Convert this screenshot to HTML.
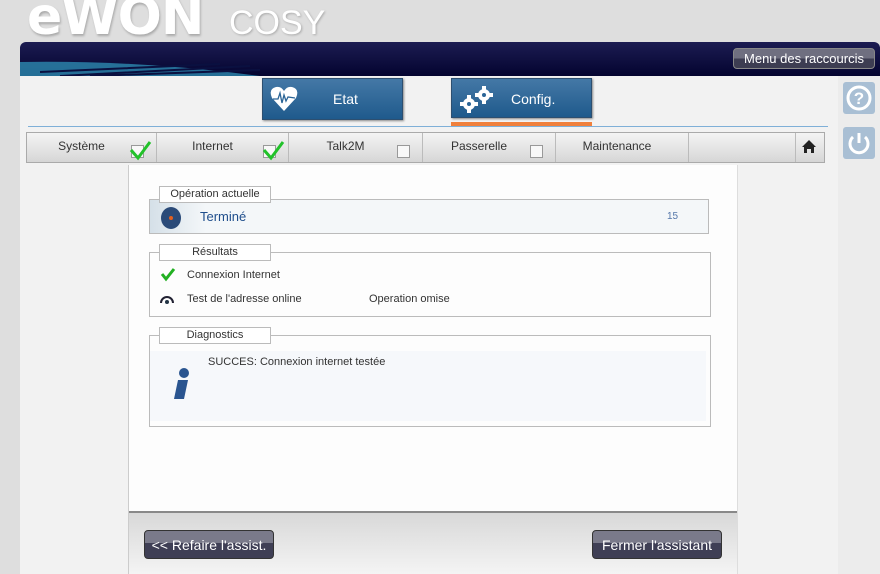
<!DOCTYPE html>
<html><head><meta charset="utf-8"><style>
*{margin:0;padding:0;box-sizing:border-box}
body{width:880px;height:574px;overflow:hidden;background:#dedede;font-family:"Liberation Sans",sans-serif;position:relative}
.abs{position:absolute}
.logo{left:27px;top:-13px;font:bold 52px "DejaVu Sans",sans-serif;color:#fff;text-shadow:1px 2px 2px #aaa;letter-spacing:-1px}
.cosy{left:229px;top:4px;font-size:34px;color:#fff;text-shadow:1px 1px 2px #aaa}
.hdr{left:20px;top:42px;width:860px;height:34px;background:linear-gradient(#1c1c52,#040430);border-radius:6px 6px 0 0;overflow:hidden}
.menu{left:733px;top:48px;width:142px;height:21px;border-radius:4px;background:linear-gradient(#6f6f80 50%,#3d3d52 50%);border:1px solid #888;color:#fff;font-size:13px;text-align:center;line-height:19px}
.content{left:20px;top:76px;width:818px;height:498px;background:#f2f2f2}
.side{left:838px;top:76px;width:42px;height:498px;background:#ececec}
.sbtn{left:843px;width:32px;height:32px;background:#a9bfd4;border-radius:3px}
.tab{top:78px;height:42px;width:141px;background:linear-gradient(#4478a6,#1f5a8c);color:#fff;font-size:14px;line-height:40px;border:1px solid #2d4f70;box-shadow:1px 1px 2px #888}
.bar{left:26px;top:132px;width:799px;height:31px;background:linear-gradient(#f4f4f4,#d6d6d6);border:1px solid #aaa}
.bar div{position:absolute;top:0;height:29px;border-right:1px solid #bbb;font-size:12px;color:#333;line-height:26px;text-align:center}
.cb{position:absolute;width:13px;height:13px;border:1px solid #999;background:#f8f8f8;top:12px}
.main{left:128px;top:165px;width:610px;height:409px;background:#fdfdfd;border-left:1px solid #ccc;border-right:1px solid #ddd}
.box{border:1px solid #bbb}
.leg{left:159px;width:112px;height:17px;background:#fff;border:1px solid #bbb;font-size:11px;color:#333;text-align:center;line-height:14px}
.t{font-size:11px;color:#333}
.foot{left:129px;top:511px;width:608px;height:63px;background:linear-gradient(#d8d8d8,#f4f4f4);border-top:2px solid #888}
.btn{top:530px;width:130px;height:29px;border-radius:4px;background:linear-gradient(#7a7a8a 45%,#3f3f55 45%);color:#fff;font-size:14px;text-align:center;line-height:29px;border:1px solid #333}
</style></head><body>
<div class="abs logo">eWON</div>
<div class="abs cosy">COSY</div>
<div class="abs hdr"><svg width="260" height="34" class="abs" style="left:0;top:0"><path d="M0 20 Q120 18 240 34 L0 34Z" fill="#2d8ab0" opacity=".8"/><path d="M40 34 L230 24 M70 34 L240 28 M20 30 L200 22" stroke="#0a1040" stroke-width="2"/></svg></div>
<div class="abs menu">Menu des raccourcis</div>
<div class="abs content"></div>
<div class="abs side"></div>
<div class="abs sbtn" style="top:82px"><svg width="32" height="32"><circle cx="16" cy="16" r="11" fill="none" stroke="#fff" stroke-width="3"/><text x="16" y="22" font-size="17" font-weight="bold" fill="#fff" text-anchor="middle" font-family="Liberation Sans">?</text></svg></div>
<div class="abs sbtn" style="top:127px"><svg width="32" height="32"><path d="M10 10 A9 9 0 1 0 22 10" fill="none" stroke="#fff" stroke-width="3"/><path d="M16 6 V16" stroke="#fff" stroke-width="3"/></svg></div>
<div class="abs tab" style="left:262px"><svg class="abs" style="left:6px;top:5px" width="30" height="30"><path d="M15 27 L3 14 Q-1 5 7 3 Q12 2 15 7 Q18 2 23 3 Q31 5 27 14Z" fill="#fff"/><path d="M4 15 L9 15 L11 9 L13 19 L15 11 L17 17 L19 13 L26 14" stroke="#2a6496" stroke-width="1.3" fill="none"/></svg><span style="margin-left:70px">Etat</span></div>
<div class="abs tab" style="left:451px;height:40px"><svg class="abs" style="left:6px;top:5px" width="40" height="32"><g fill="#fff"><circle cx="11" cy="20" r="6"/><circle cx="26" cy="11" r="6"/><path d="M9 11h4v4h-4zM9 25h4v4h-4zM2 18h4v4h-4zM16 18h4v4h-4zM24 2h4v4h-4zM24 16h4v4h-4zM17 9h4v4h-4zM31 9h4v4h-4z"/></g><circle cx="11" cy="20" r="2" fill="#2a6496"/><circle cx="26" cy="11" r="2" fill="#2a6496"/></svg><span style="margin-left:59px">Config.</span></div>
<div class="abs" style="left:451px;top:122px;width:141px;height:4px;background:#f0803c"></div>
<div class="abs" style="left:28px;top:126px;width:800px;height:1px;background:#7fb0d8"></div>
<div class="abs bar">
<div style="left:0;width:130px"><span style="margin-right:20px">Système</span><span class="cb" style="left:104px"></span></div>
<div style="left:130px;width:132px"><span style="margin-right:20px">Internet</span><span class="cb" style="left:106px"></span></div>
<div style="left:262px;width:134px"><span style="margin-right:20px">Talk2M</span><span class="cb" style="left:108px"></span></div>
<div style="left:396px;width:133px"><span style="margin-right:20px">Passerelle</span><span class="cb" style="left:107px"></span></div>
<div style="left:529px;width:133px"><span style="margin-right:10px">Maintenance</span></div>
<div style="left:662px;width:107px"></div>
<div style="left:769px;width:29px;border:none;font-size:15px"></div>
</div>
<svg class="abs" style="left:128px;top:136px" width="170" height="26"><path d="M3 14 L10 22 L22 6" stroke="#22c22a" stroke-width="3" fill="none"/><path d="M136 14 L143 22 L155 6" stroke="#22c22a" stroke-width="3" fill="none"/></svg>
<div class="abs" style="left:802px;top:139px;width:14px;height:14px"><svg width="14" height="14"><path d="M7 1 L14 8 H12 V14 H9 V10 H5 V14 H2 V8 H0Z" fill="#222"/></svg></div>
<div class="abs main"></div>
<div class="abs box" style="left:149px;top:199px;width:560px;height:35px;background:linear-gradient(90deg,#d5e0e8,#f4f7f9 10%)"></div>
<div class="abs leg" style="top:186px">Opération actuelle</div>
<svg class="abs" style="left:160px;top:206px" width="22" height="24"><ellipse cx="11" cy="12" rx="10" ry="11" fill="#2a4a78"/><circle cx="11" cy="12" r="2" fill="#e06020"/></svg>
<div class="abs" style="left:200px;top:209px;font-size:13px;color:#1f4e8c">Terminé</div>
<div class="abs" style="left:667px;top:211px;font-size:10px;color:#5577aa">15</div>
<div class="abs box" style="left:149px;top:252px;width:562px;height:65px"></div>
<div class="abs leg" style="top:244px">Résultats</div>
<svg class="abs" style="left:160px;top:266px" width="16" height="16"><path d="M2 8 L6 13 L14 3" stroke="#22b022" stroke-width="3" fill="none"/></svg>
<div class="abs t" style="left:187px;top:269px">Connexion Internet</div>
<svg class="abs" style="left:159px;top:291px" width="16" height="14"><path d="M2 12 A6 6 0 0 1 14 12" stroke="#223" stroke-width="2" fill="none"/><circle cx="8" cy="11" r="2" fill="#234"/></svg>
<div class="abs t" style="left:187px;top:293px">Test de l'adresse online</div>
<div class="abs t" style="left:369px;top:293px">Operation omise</div>
<div class="abs box" style="left:149px;top:335px;width:562px;height:92px"></div>
<div class="abs" style="left:150px;top:351px;width:556px;height:70px;background:#f6f8fb"></div>
<div class="abs leg" style="top:327px">Diagnostics</div>
<svg class="abs" style="left:168px;top:367px" width="28" height="36"><circle cx="16" cy="6" r="5" fill="#2a5590"/><path d="M10 13 H20 L16 32 H6Z" fill="#2a5590"/></svg>
<div class="abs t" style="left:208px;top:356px">SUCCES: Connexion internet testée</div>
<div class="abs foot"></div>
<div class="abs btn" style="left:144px">&lt;&lt; Refaire l'assist.</div>
<div class="abs btn" style="left:592px">Fermer l'assistant</div>
</body></html>
